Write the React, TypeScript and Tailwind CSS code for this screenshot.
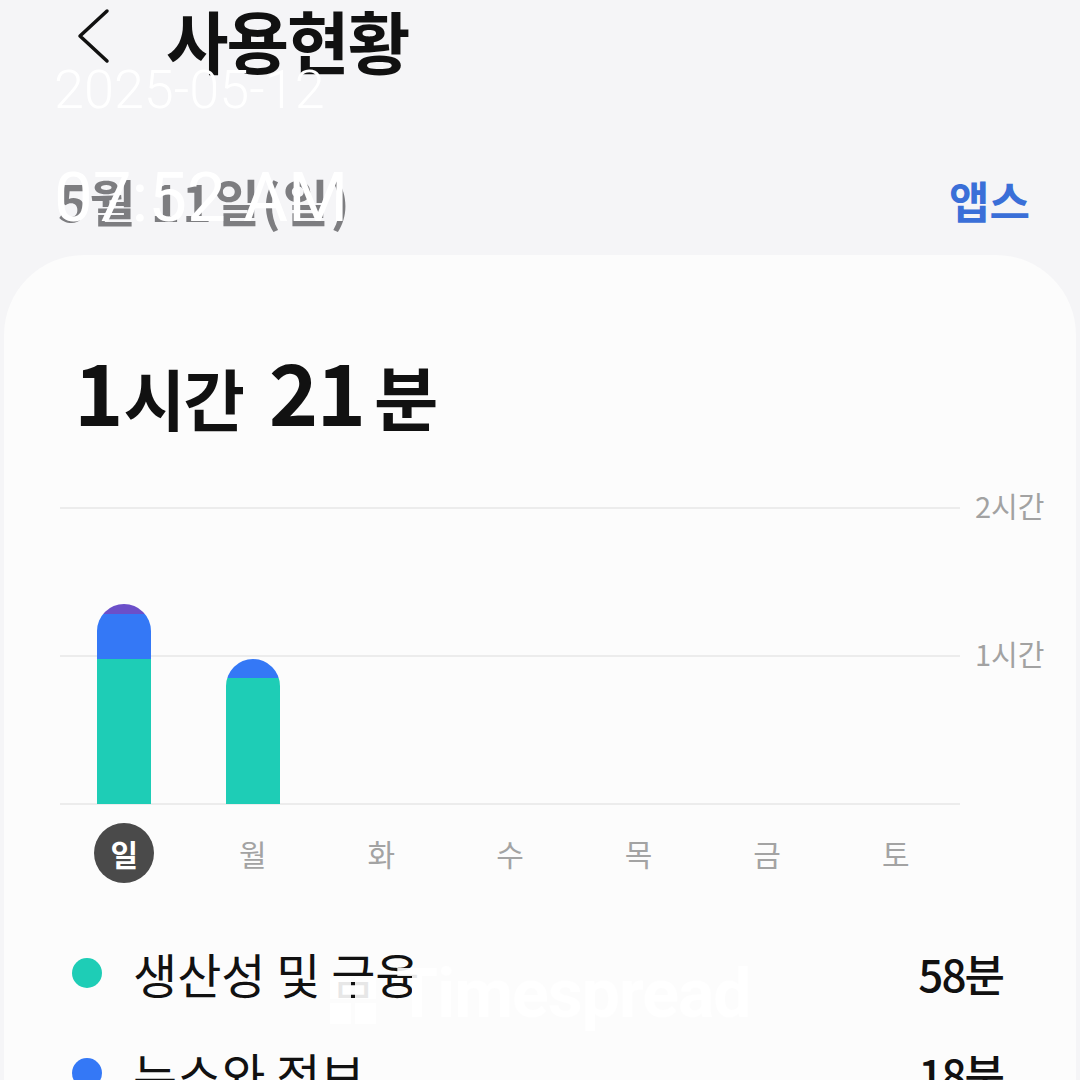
import React from "react";

const KR = { fontFamily: '"Noto Sans CJK KR", "Noto Sans", sans-serif' };

type Seg = { h: number; c: string };
const bars: Seg[][] = [
  [
    { h: 10, c: "bg-[#6b4fc9]" },
    { h: 45, c: "bg-[#3478f6]" },
    { h: 145, c: "bg-[#1ecdb6]" },
  ],
  [
    { h: 19, c: "bg-[#3478f6]" },
    { h: 126, c: "bg-[#1ecdb6]" },
  ],
  [],
  [],
  [],
  [],
  [],
];
const days = ["일", "월", "화", "수", "목", "금", "토"];

export default function App() {
  return (
    <div
      className="relative w-[1080px] h-[1080px] overflow-hidden bg-[#f5f5f7]"
      style={KR}
    >
      {/* header */}
      <div className="flex items-center h-[84px]">
        <svg
          width="40"
          height="60"
          viewBox="0 0 40 60"
          className="ml-[72px] mt-[-12px]"
        >
          <path
            d="M35 5 L8 30 L35 55"
            fill="none"
            stroke="#111"
            strokeWidth="3.5"
            strokeLinecap="round"
            strokeLinejoin="round"
          />
        </svg>
        <div className="ml-[54px] mt-[-4px] text-[68px] font-bold text-[#111] leading-none tracking-[-2px]">
          사용현황
        </div>
      </div>

      {/* date row */}
      <div className="flex items-center justify-between h-[80px] mt-[76px] pl-[58px] pr-[50px]">
        <div className="text-[50px] font-bold text-[#7d7d80] leading-none tracking-[2px]">
          5월 11일(일)
        </div>
        <div className="text-[44px] font-bold text-[#3a6fd8] leading-none">
          앱스
        </div>
      </div>

      {/* card */}
      <div className="mt-[15px] mx-[4px] h-[900px] rounded-t-[80px] bg-[#fcfcfc] pt-[93px]">
        <div className="flex items-baseline pl-[70px] h-[80px] font-bold text-[#111] leading-none">
          <span className="text-[84px] tracking-[-4px]">1</span>
          <span className="text-[67px] ml-[4px] tracking-[-2px]">시간</span>
          <span className="text-[84px] ml-[26px] tracking-[-2px]">21</span>
          <span className="text-[70px] ml-[10px]">분</span>
        </div>

        {/* chart */}
        <div className="relative ml-[56px] mt-[79px] w-[900px] h-[298px]">
          <div className="absolute left-0 right-0 top-0 h-[2px] bg-[#ececec]" />
          <div className="absolute left-0 right-0 top-[148px] h-[2px] bg-[#ececec]" />
          <div className="absolute left-0 right-0 bottom-0 h-[2px] bg-[#ececec]" />
          <div className="absolute left-[915px] top-[-22px] whitespace-nowrap text-[29px] text-[#a2a2a2] leading-[40px]">
            2시간
          </div>
          <div className="absolute left-[915px] top-[126px] whitespace-nowrap text-[29px] text-[#a2a2a2] leading-[40px]">
            1시간
          </div>
          <div className="relative grid grid-cols-7 h-[297px] items-end">
            {bars.map((segs, i) => (
              <div key={i} className="flex justify-center">
                {segs.length > 0 && (
                  <div className="w-[54px] rounded-t-full overflow-hidden flex flex-col">
                    {segs.map((s, j) => (
                      <div key={j} className={s.c} style={{ height: s.h }} />
                    ))}
                  </div>
                )}
              </div>
            ))}
          </div>
        </div>

        {/* days */}
        <div className="ml-[56px] w-[900px] grid grid-cols-7 h-[60px] mt-[18px]">
          {days.map((d, i) => (
            <div key={d} className="flex items-center justify-center">
              {i === 0 ? (
                <div className="w-[60px] h-[60px] rounded-full bg-[#4a4a4a] text-white text-[30px] font-bold flex items-center justify-center leading-none">
                  {d}
                </div>
              ) : (
                <div className="text-[30px] text-[#a3a3a3] leading-none">
                  {d}
                </div>
              )}
            </div>
          ))}
        </div>

        {/* legend */}
        <div className="mt-[40px] pl-[68px] pr-[73px]">
          <div className="flex items-center h-[100px]">
            <div className="w-[30px] h-[30px] rounded-full bg-[#1ecdb6]" />
            <div className="ml-[31px] text-[48px] text-[#111] leading-none flex-1">
              생산성 및 금융
            </div>
            <div className="text-[44px] font-medium text-[#111] leading-none tracking-[-2px]">
              58분
            </div>
          </div>
          <div className="flex items-center h-[100px]">
            <div className="w-[30px] h-[30px] rounded-full bg-[#3478f6]" />
            <div className="ml-[31px] text-[48px] text-[#111] leading-none flex-1">
              뉴스와 정보
            </div>
            <div className="text-[44px] font-medium text-[#111] leading-none tracking-[-2px]">
              18분
            </div>
          </div>
        </div>
      </div>

      {/* overlays */}
      <div
        className="absolute left-[54px] top-[60px] text-[54px] font-light text-white leading-[60px]"
        style={{ fontFamily: 'Roboto, "Noto Sans", sans-serif' }}
      >
        2025-05-12
      </div>
      <div
        className="absolute left-[54px] top-[158px] text-[69px] font-normal text-white leading-[80px]"
        style={{ fontFamily: 'Roboto, "Noto Sans", sans-serif' }}
      >
        07:52 AM
      </div>
      <div
        className="absolute left-[330px] top-[960px] flex items-center gap-[20px] text-white/90"
        style={{ fontFamily: 'Roboto, "Noto Sans", sans-serif' }}
      >
        <div className="w-[46px] h-[46px] mt-[14px] grid grid-cols-2 gap-[4px]">
          <div className="bg-white/90" />
          <div className="bg-white/90" />
          <div className="bg-white/90" />
          <div className="bg-white/90" />
        </div>
        <div className="text-[68px] font-bold leading-none tracking-[-1px]">
          Timespread
        </div>
      </div>
    </div>
  );
}
